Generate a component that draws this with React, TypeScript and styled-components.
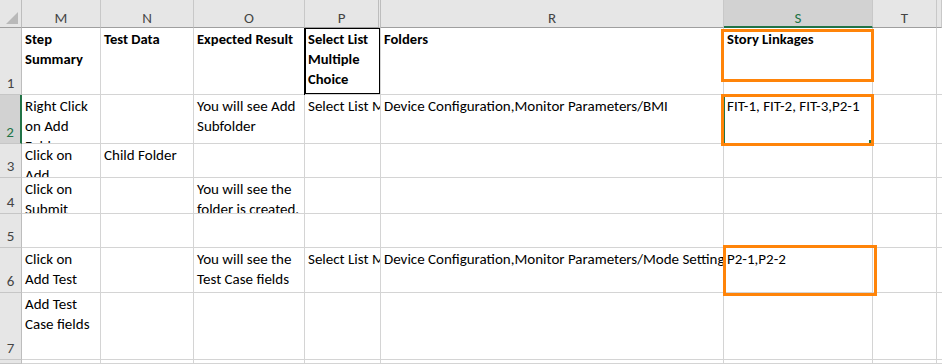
import React from "react";
import styled, { createGlobalStyle } from "styled-components";

type MarkKind = "head" | "mid" | "low";

interface CellData {
  text?: string;
  bold?: boolean;
  wrap?: boolean;
  outlined?: boolean;
  selected?: boolean;
  mark?: MarkKind;
}

interface RowData {
  num: string;
  height: number;
  cells: CellData[];
}

const columns = ["M", "N", "O", "P", "R", "S", "T", ""];
const widths = [79, 93, 111, 76, 343, 149, 64, 5];

const empty = (): CellData[] => [{}, {}, {}, {}, {}, {}, {}, {}];

const rows: RowData[] = [
  {
    num: "1",
    height: 67,
    cells: [
      { text: "Step\nSummary", bold: true, wrap: true },
      { text: "Test Data", bold: true, wrap: true },
      { text: "Expected Result", bold: true, wrap: true },
      { text: "Select List\nMultiple\nChoice", bold: true, wrap: true, outlined: true },
      { text: "Folders", bold: true },
      { text: "Story Linkages", bold: true, mark: "head" },
      {},
      {},
    ],
  },
  {
    num: "2",
    height: 49,
    cells: [
      { text: "Right Click\non Add\nFolder", wrap: true },
      {},
      { text: "You will see Add\nSubfolder", wrap: true },
      { text: "Select List Multiple Choice" },
      { text: "Device Configuration,Monitor Parameters/BMI" },
      { text: "FIT-1, FIT-2, FIT-3,P2-1", selected: true, mark: "mid" },
      {},
      {},
    ],
  },
  {
    num: "3",
    height: 34,
    cells: [
      { text: "Click on\nAdd\nFolder", wrap: true },
      { text: "Child Folder" },
      {},
      {},
      {},
      {},
      {},
      {},
    ],
  },
  {
    num: "4",
    height: 36,
    cells: [
      { text: "Click on\nSubmit", wrap: true },
      {},
      { text: "You will see the\nfolder is created.", wrap: true },
      {},
      {},
      {},
      {},
      {},
    ],
  },
  { num: "5", height: 34, cells: empty() },
  {
    num: "6",
    height: 45,
    cells: [
      { text: "Click on\nAdd Test", wrap: true },
      {},
      { text: "You will see the\nTest Case fields", wrap: true },
      { text: "Select List Multiple Choice" },
      { text: "Device Configuration,Monitor Parameters/Mode Settings" },
      { text: "P2-1,P2-2", mark: "low" },
      {},
      {},
    ],
  },
  {
    num: "7",
    height: 67,
    cells: [{ text: "Add Test\nCase fields", wrap: true }, {}, {}, {}, {}, {}, {}, {}],
  },
  { num: "", height: 4, cells: empty() },
];

function App() {
  return (
    <>
      <GlobalStyle />
      <Sheet
        $cols={`22px ${widths.map((w) => `${w}px`).join(" ")}`}
        $rows={`28px ${rows.map((r) => `${r.height}px`).join(" ")}`}
      >
        <Corner>
          <CornerMark />
        </Corner>
        {columns.map((col) => (
          <ColHeader key={col || "end"} $active={col === "S"} $hiddenNext={col === "P"}>
            {col}
          </ColHeader>
        ))}
        {rows.map((row) => (
          <React.Fragment key={row.num || "end"}>
            <RowHeader $active={row.num === "2"}>{row.num}</RowHeader>
            {row.cells.map((cell, i) => (
              <Cell
                key={i}
                $bold={cell.bold}
                $wrap={cell.wrap}
                $outlined={cell.outlined}
                $open={!!cell.mark}
              >
                {cell.text}
                {cell.selected && (
                  <Selection>
                    <FillHandle />
                  </Selection>
                )}
                {cell.mark && <Mark $at={cell.mark} />}
              </Cell>
            ))}
          </React.Fragment>
        ))}
      </Sheet>
    </>
  );
}

export default App;

const GlobalStyle = createGlobalStyle`
  html, body {
    margin: 0;
    padding: 0;
    background: #ffffff;
  }
  body {
    font-family: Calibri, Carlito, Lato, "Liberation Sans", sans-serif;
    overflow: hidden;
  }
`;

const Sheet = styled.div<{ $cols: string; $rows: string }>`
  display: grid;
  grid-template-columns: ${(p) => p.$cols};
  grid-template-rows: ${(p) => p.$rows};
  width: 942px;
  height: 364px;
  overflow: hidden;
  font-size: 15px;
  color: #000;
`;

const Corner = styled.div`
  display: flex;
  align-items: flex-end;
  justify-content: flex-end;
  padding: 0 3px 3px 0;
  background: #e6e6e6;
  border-right: 1px solid #bdbdbd;
  border-bottom: 1px solid #9f9f9f;
  box-sizing: border-box;
`;

const CornerMark = styled.div`
  width: 0;
  height: 0;
  border-left: 12px solid transparent;
  border-bottom: 12px solid #b9b9b9;
`;

const ColHeader = styled.div<{ $active?: boolean; $hiddenNext?: boolean }>`
  display: flex;
  align-items: center;
  justify-content: center;
  padding-top: 9px;
  box-sizing: border-box;
  background: ${(p) => (p.$active ? "#d2d2d2" : "#e6e6e6")};
  color: ${(p) => (p.$active ? "#217346" : "#444")};
  border-right: ${(p) => (p.$hiddenNext ? "3px double #bdbdbd" : "1px solid #c8c8c8")};
  border-bottom: ${(p) => (p.$active ? "2px solid #217346" : "1px solid #9f9f9f")};
  font-size: 15px;
`;

const RowHeader = styled.div<{ $active?: boolean }>`
  display: flex;
  align-items: flex-end;
  justify-content: center;
  padding-bottom: 2px;
  box-sizing: border-box;
  overflow: hidden;
  background: ${(p) => (p.$active ? "#d2d2d2" : "#e6e6e6")};
  color: ${(p) => (p.$active ? "#217346" : "#444")};
  border-right: ${(p) => (p.$active ? "2px solid #217346" : "1px solid #bdbdbd")};
  border-bottom: 1px solid #c6c6c6;
  font-size: 15px;
`;

const Cell = styled.div<{ $bold?: boolean; $wrap?: boolean; $outlined?: boolean; $open?: boolean }>`
  position: relative;
  box-sizing: border-box;
  padding: 1px 3px 0 3px;
  border-right: 1px solid #d4d4d4;
  border-bottom: 1px solid #d4d4d4;
  line-height: 20px;
  font-size: ${(p) => (p.$bold ? "14.6px" : "15px")};
  font-weight: ${(p) => (p.$bold ? 700 : 400)};
  white-space: ${(p) => (p.$wrap ? "pre-line" : "nowrap")};
  overflow: ${(p) => (p.$outlined || p.$open ? "visible" : "hidden")};
  box-shadow: ${(p) => (p.$outlined ? "inset 0 0 0 1px #000, -1px 0 0 #000" : "none")};
`;

const Selection = styled.div`
  position: absolute;
  inset: -1px -1px -2px -1px;
  border: 2px solid #217346;
  pointer-events: none;
`;

const FillHandle = styled.div`
  position: absolute;
  right: -4px;
  bottom: -3px;
  width: 5px;
  height: 5px;
  background: #217346;
  border: 1px solid #fff;
`;

const markBoxes: Record<MarkKind, { left: number; top: number; width: number; height: number }> = {
  head: { left: -3, top: 1, width: 153, height: 53 },
  mid: { left: -3, top: -1, width: 153, height: 52 },
  low: { left: -1, top: -3, width: 154, height: 51 },
};

const Mark = styled.div<{ $at: MarkKind }>`
  position: absolute;
  left: ${(p) => markBoxes[p.$at].left}px;
  top: ${(p) => markBoxes[p.$at].top}px;
  width: ${(p) => markBoxes[p.$at].width}px;
  height: ${(p) => markBoxes[p.$at].height}px;
  box-sizing: border-box;
  border: 3.5px solid #ff8409;
  pointer-events: none;
  z-index: 2;
`;
